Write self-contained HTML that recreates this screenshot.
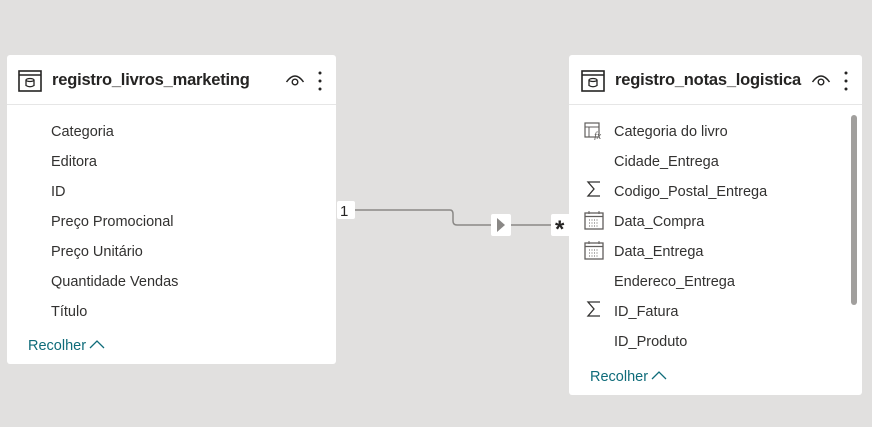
<!DOCTYPE html>
<html><head><meta charset="utf-8"><style>
body{margin:0;width:872px;height:427px;background:#e1e0df;font-family:"Liberation Sans",sans-serif;position:relative;overflow:hidden}
.card{position:absolute;background:#fff;border-radius:3px}
.hd{position:absolute;left:0;right:0;top:0;height:49px;border-bottom:1px solid #e6e6e6}
.title{position:absolute;top:16px;font-size:16.5px;font-weight:bold;color:#252423;letter-spacing:-0.2px}
.row{position:absolute;font-size:14.5px;color:#323130;white-space:nowrap}
.rec{position:absolute;font-size:14.5px;color:#0f6c7a}
.ic{position:absolute}
</style></head><body>
<svg width="872" height="427" style="position:absolute;left:0;top:0">
<path d="M355 210 H450 Q453 210 453 214 V221 Q453 225 457 225 H555" stroke="#8a8886" stroke-width="1.5" fill="none"/>
<rect x="337" y="201" width="18" height="18" rx="2" fill="#fff"/>
<text x="340" y="216" font-family="Liberation Sans" font-size="15" fill="#252423">1</text>
<rect x="491" y="214" width="20" height="22" rx="2" fill="#fff"/>
<path d="M497 218 L505 225 L497 232 Z" fill="#8a8886"/>
<rect x="551" y="214" width="20" height="22" rx="2" fill="#fff"/>
<text x="555" y="237" font-family="Liberation Sans" font-size="24" font-weight="bold" fill="#252423">*</text>
</svg>

<div class="card" style="left:7px;top:55px;width:329px;height:309px">
 <div class="hd"></div>
 <svg class="ic" style="left:11px;top:15px" width="24" height="22"><rect x="1" y="1" width="22" height="20" fill="none" stroke="#252423" stroke-width="1.6"/><line x1="1" y1="5" x2="23" y2="5" stroke="#252423" stroke-width="1.6"/><ellipse cx="12" cy="10" rx="4" ry="1.5" fill="none" stroke="#252423" stroke-width="1.3"/><path d="M8 10 V15.5 Q12 18 16 15.5 V10" fill="none" stroke="#252423" stroke-width="1.3"/></svg>
 <div class="title" style="left:45px">registro_livros_marketing</div>
 <svg class="ic" style="left:278px;top:18px" width="20" height="14"><path d="M1.5 9 Q10 -3 18.5 9" fill="none" stroke="#252423" stroke-width="1.5"/><circle cx="10" cy="9" r="2.8" fill="none" stroke="#252423" stroke-width="1.4"/></svg>
 <svg class="ic" style="left:311px;top:16px" width="4" height="20"><circle cx="2" cy="2" r="1.5" fill="#252423"/><circle cx="2" cy="10" r="1.5" fill="#252423"/><circle cx="2" cy="18" r="1.5" fill="#252423"/></svg>
 <div class="row" style="left:44px;top:69px">Categoria</div>
 <div class="row" style="left:44px;top:99px">Editora</div>
 <div class="row" style="left:44px;top:129px">ID</div>
 <div class="row" style="left:44px;top:159px">Preço Promocional</div>
 <div class="row" style="left:44px;top:189px">Preço Unitário</div>
 <div class="row" style="left:44px;top:219px">Quantidade Vendas</div>
 <div class="row" style="left:44px;top:249px">Título</div>
 <div class="rec" style="left:21px;top:283px">Recolher</div>
 <svg class="ic" style="left:82px;top:284px" width="16" height="10"><path d="M1 9 L8 2 L15 9" fill="none" stroke="#0f6c7a" stroke-width="1.3"/></svg>
</div>

<div class="card" style="left:569px;top:55px;width:293px;height:340px">
 <div class="hd"></div>
 <svg class="ic" style="left:12px;top:15px" width="24" height="22"><rect x="1" y="1" width="22" height="20" fill="none" stroke="#252423" stroke-width="1.6"/><line x1="1" y1="5" x2="23" y2="5" stroke="#252423" stroke-width="1.6"/><ellipse cx="12" cy="10" rx="4" ry="1.5" fill="none" stroke="#252423" stroke-width="1.3"/><path d="M8 10 V15.5 Q12 18 16 15.5 V10" fill="none" stroke="#252423" stroke-width="1.3"/></svg>
 <div class="title" style="left:46px">registro_notas_logistica</div>
 <svg class="ic" style="left:242px;top:18px" width="20" height="14"><path d="M1.5 9 Q10 -3 18.5 9" fill="none" stroke="#252423" stroke-width="1.5"/><circle cx="10" cy="9" r="2.8" fill="none" stroke="#252423" stroke-width="1.4"/></svg>
 <svg class="ic" style="left:275px;top:16px" width="4" height="20"><circle cx="2" cy="2" r="1.5" fill="#252423"/><circle cx="2" cy="10" r="1.5" fill="#252423"/><circle cx="2" cy="18" r="1.5" fill="#252423"/></svg>
 <div style="position:absolute;left:282px;top:60px;width:6px;height:190px;background:#a19f9d;border-radius:3px"></div>
 <svg class="ic" style="left:15px;top:67px" width="22" height="18"><rect x="1" y="1" width="14" height="14" fill="none" stroke="#605e5c" stroke-width="1.2"/><line x1="1" y1="5" x2="15" y2="5" stroke="#605e5c"/><line x1="5" y1="5" x2="5" y2="15" stroke="#605e5c"/><text x="10" y="17" font-family="Liberation Serif" font-style="italic" font-size="10" fill="#605e5c">fx</text></svg>
 <div class="row" style="left:45px;top:69px">Categoria do livro</div>
 <div class="row" style="left:45px;top:99px">Cidade_Entrega</div>
 <svg class="ic" style="left:17px;top:125px" width="16" height="18"><path d="M14 2 H2 L8 9 L2 16 H14" fill="none" stroke="#323130" stroke-width="1.3"/></svg>
 <div class="row" style="left:45px;top:129px">Codigo_Postal_Entrega</div>
 <svg class="ic" style="left:15px;top:155px" width="20" height="20"><rect x="1" y="3" width="18" height="16" fill="none" stroke="#605e5c" stroke-width="1.3"/><line x1="1" y1="6.5" x2="19" y2="6.5" stroke="#605e5c" stroke-width="1.3"/><line x1="5" y1="1" x2="5" y2="4" stroke="#605e5c"/><line x1="15" y1="1" x2="15" y2="4" stroke="#605e5c"/><path d="M5 10h10M5 13h10M5 16h10" stroke="#605e5c" stroke-dasharray="1 1.5"/></svg>
 <div class="row" style="left:45px;top:159px">Data_Compra</div>
 <svg class="ic" style="left:15px;top:185px" width="20" height="20"><rect x="1" y="3" width="18" height="16" fill="none" stroke="#605e5c" stroke-width="1.3"/><line x1="1" y1="6.5" x2="19" y2="6.5" stroke="#605e5c" stroke-width="1.3"/><line x1="5" y1="1" x2="5" y2="4" stroke="#605e5c"/><line x1="15" y1="1" x2="15" y2="4" stroke="#605e5c"/><path d="M5 10h10M5 13h10M5 16h10" stroke="#605e5c" stroke-dasharray="1 1.5"/></svg>
 <div class="row" style="left:45px;top:189px">Data_Entrega</div>
 <div class="row" style="left:45px;top:219px">Endereco_Entrega</div>
 <svg class="ic" style="left:17px;top:245px" width="16" height="18"><path d="M14 2 H2 L8 9 L2 16 H14" fill="none" stroke="#323130" stroke-width="1.3"/></svg>
 <div class="row" style="left:45px;top:249px">ID_Fatura</div>
 <div class="row" style="left:45px;top:279px">ID_Produto</div>
 <div class="rec" style="left:21px;top:314px">Recolher</div>
 <svg class="ic" style="left:82px;top:315px" width="16" height="10"><path d="M1 9 L8 2 L15 9" fill="none" stroke="#0f6c7a" stroke-width="1.3"/></svg>
</div>
</body></html>
